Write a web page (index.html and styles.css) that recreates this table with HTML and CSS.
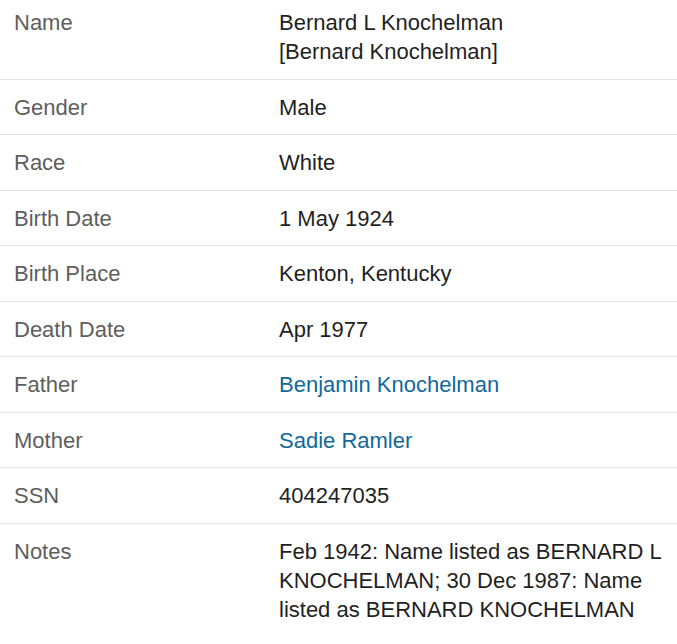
FILE: index.html
```html
<!DOCTYPE html>
<html lang="en">
<head>
<meta charset="utf-8">
<title>Record</title>
<link rel="stylesheet" href="styles.css">
</head>
<body>
<div class="record">
  <div class="row"><div class="label">Name</div><div class="value">Bernard L Knochelman<br>[Bernard Knochelman]</div></div>
  <div class="row"><div class="label">Gender</div><div class="value">Male</div></div>
  <div class="row"><div class="label">Race</div><div class="value">White</div></div>
  <div class="row"><div class="label">Birth Date</div><div class="value">1 May 1924</div></div>
  <div class="row"><div class="label">Birth Place</div><div class="value">Kenton, Kentucky</div></div>
  <div class="row"><div class="label">Death Date</div><div class="value">Apr 1977</div></div>
  <div class="row"><div class="label">Father</div><div class="value"><a class="link" href="#">Benjamin Knochelman</a></div></div>
  <div class="row"><div class="label">Mother</div><div class="value"><a class="link" href="#">Sadie Ramler</a></div></div>
  <div class="row"><div class="label">SSN</div><div class="value">404247035</div></div>
  <div class="row last"><div class="label">Notes</div><div class="value">Feb 1942: Name listed as BERNARD L KNOCHELMAN; 30 Dec 1987: Name listed as BERNARD KNOCHELMAN</div></div>
</div>
</body>
</html>
```
FILE: styles.css
```css
html, body {
  margin: 0;
  padding: 0;
  background: #ffffff;
}
.record {
  margin-top: -5px;
  font-family: "Liberation Sans", Arial, sans-serif;
  font-size: 22px;
  line-height: 29px;
}
.row {
  display: grid;
  grid-template-columns: 265px 1fr;
  padding: 13px 8px 12.5px 14px;
  border-bottom: 1px solid #e3e3e3;
}
.row.last {
  border-bottom: none;
}
.label {
  color: #5e5e5e;
}
.value {
  color: #1f1f1f;
}
.link {
  color: #10699b;
  text-decoration: none;
}
```
